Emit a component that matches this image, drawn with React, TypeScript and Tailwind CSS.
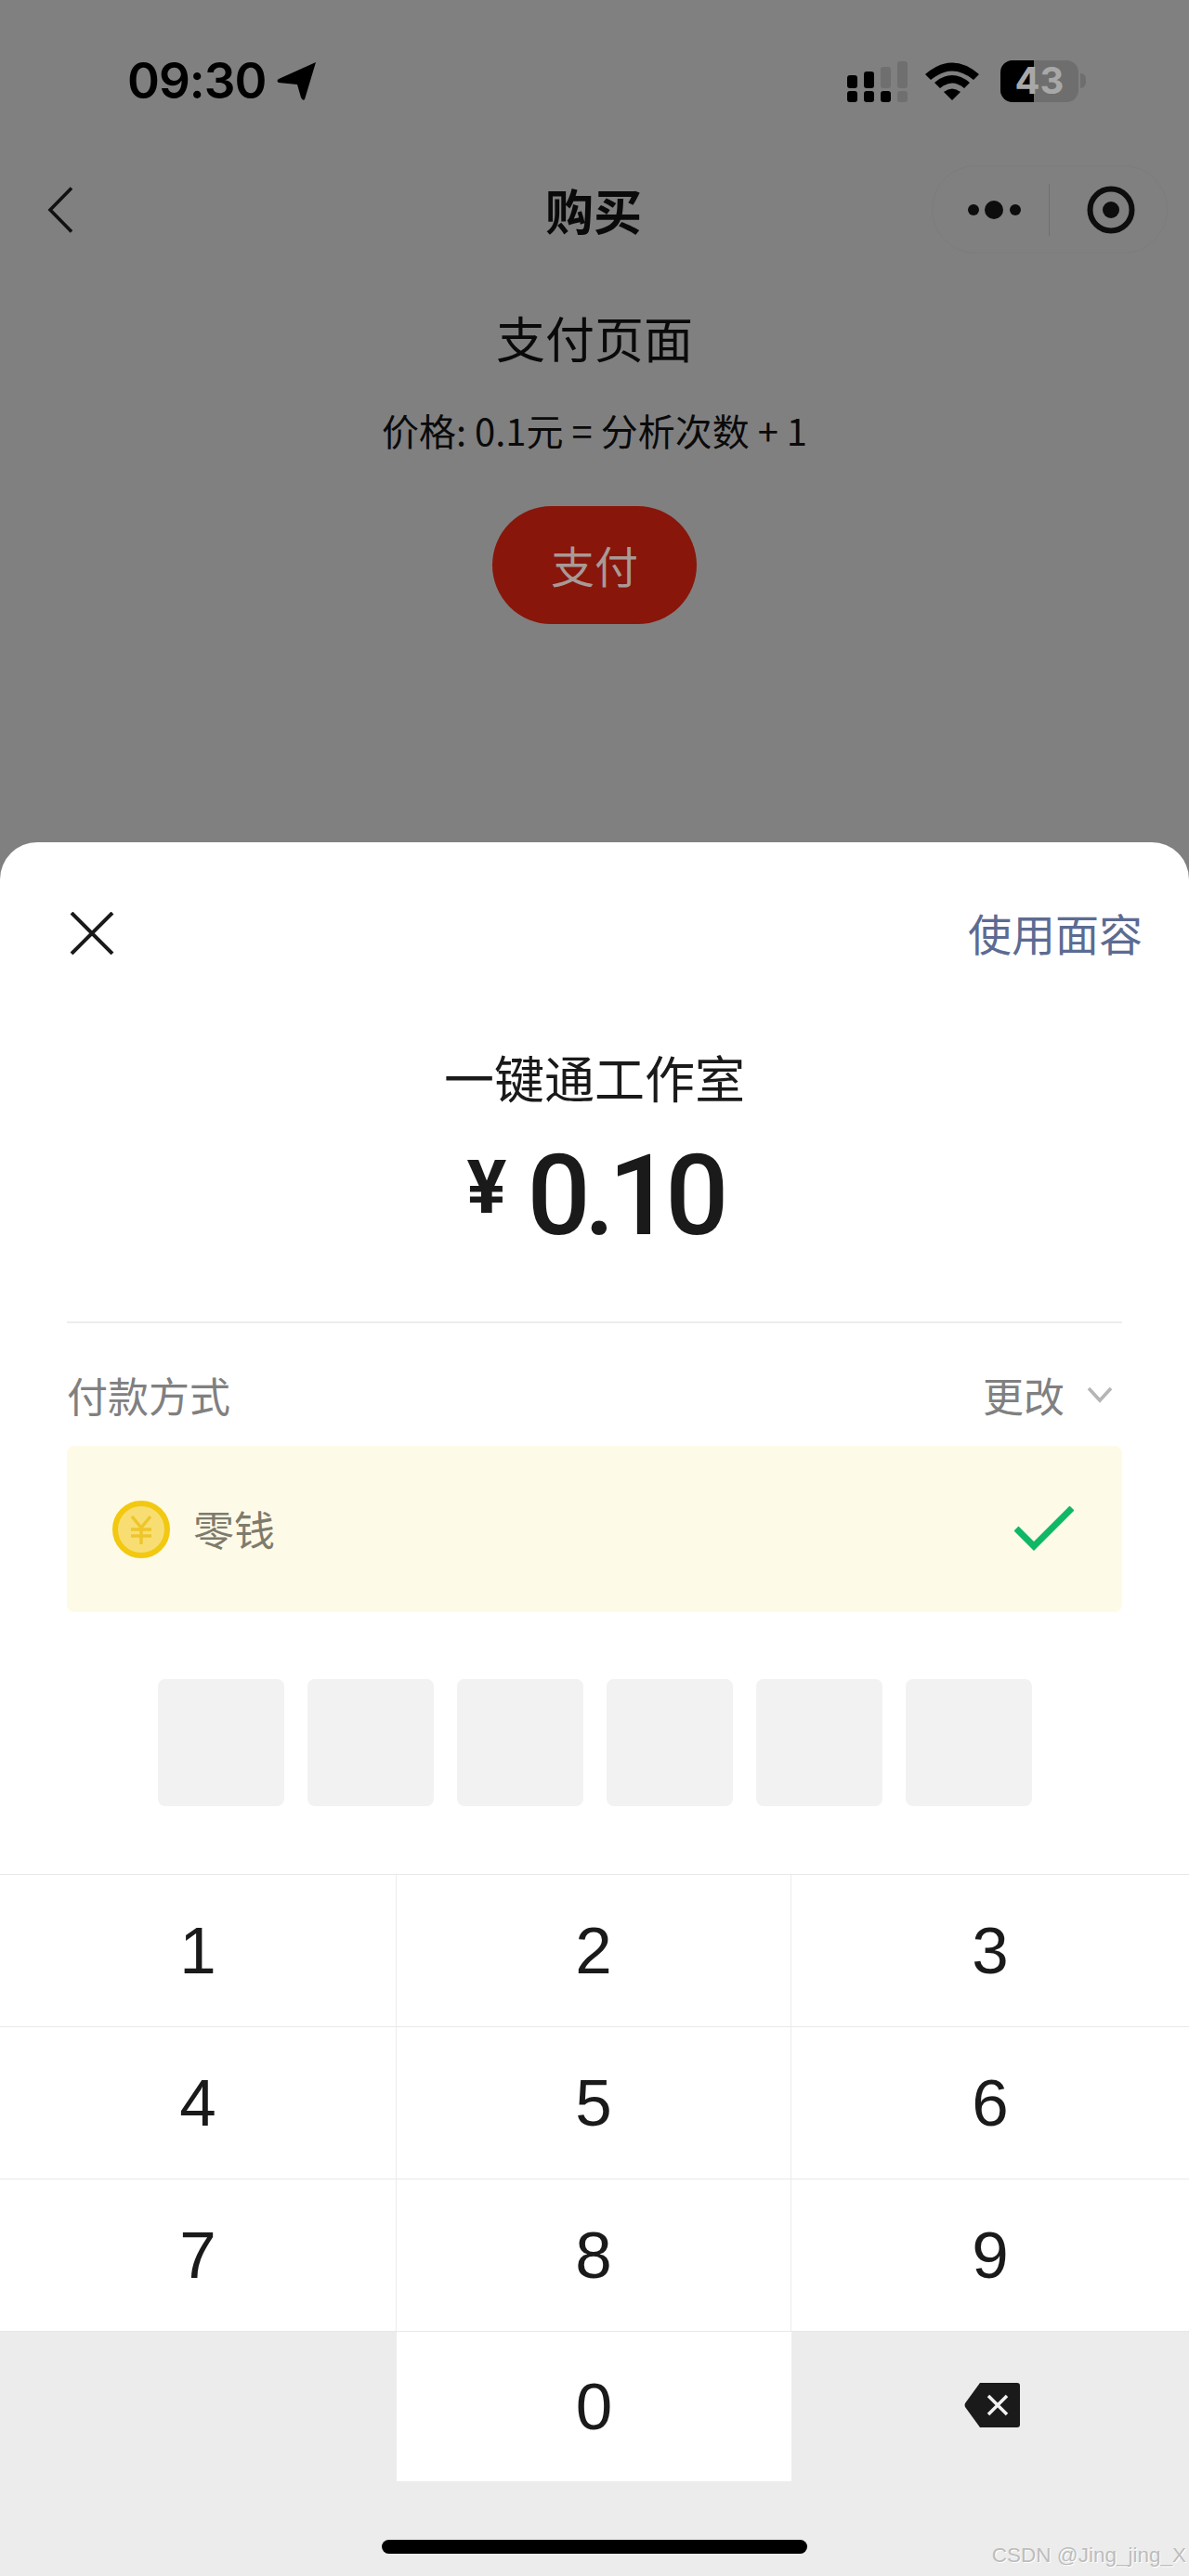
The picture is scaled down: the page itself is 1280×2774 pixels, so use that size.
const CJK = "font-['Noto_Sans_CJK_SC','Noto_Sans',sans-serif]";

function Signal() {
  return (
    <svg width="70" height="46" viewBox="0 0 70 46" className="block">
      <rect x="0" y="17" width="11" height="14" rx="3" fill="#000" />
      <rect x="18" y="13" width="11" height="18" rx="3" fill="#000" />
      <rect x="36" y="8" width="11" height="23" rx="3" fill="#6f6f6f" />
      <rect x="54" y="2" width="11" height="29" rx="3" fill="#6f6f6f" />
      <rect x="0" y="34" width="11" height="12" rx="3" fill="#000" />
      <rect x="18" y="34" width="11" height="12" rx="3" fill="#000" />
      <rect x="36" y="34" width="11" height="12" rx="3" fill="#000" />
      <rect x="54" y="34" width="11" height="12" rx="3" fill="#6f6f6f" />
    </svg>
  );
}

function Wifi() {
  return (
    <svg width="58" height="42" viewBox="0 0 58 42" className="block">
      <path d="M0 14 Q29 -11 58 14 L52 20 Q29 1 6 20 Z" fill="#000" />
      <path d="M10 23 Q29 7 48 23 L42 29 Q29 18 16 29 Z" fill="#000" />
      <path d="M20 33 Q29 26 38 33 L29 42 Z" fill="#000" />
    </svg>
  );
}

function Battery() {
  return (
    <div className="relative flex items-center">
      <div className="relative w-[84px] h-[45px] rounded-[13px] bg-[#6e6e6e] flex items-center justify-center">
        <div className="absolute left-0 top-0 bottom-0 w-[36px] rounded-l-[13px] bg-black" />
        <span className="relative text-[40px] leading-none font-bold text-[#a8a8a8] font-['Inter',sans-serif]">43</span>
      </div>
      <div className="w-[6px] h-[16px] ml-[2px] rounded-r-full bg-[#6e6e6e]" />
    </div>
  );
}

function StatusBar() {
  return (
    <div className="h-[174px] mb-[4px] pl-[137px] pr-[111px] flex items-center justify-between shrink-0">
      <div className="flex items-center gap-[12px]">
        <span className="text-[53px] leading-none font-semibold text-black tracking-[-1px] font-['Inter',sans-serif]">09:30</span>
        <svg width="42" height="41" viewBox="0 0 42 41" className="block">
          <path d="M42 0 L30 40 Q28 42 26 38 L22 24 L2 22 Q-1 20 2 18 Z" fill="#000" />
        </svg>
      </div>
      <div className="flex items-center gap-[14px]">
        <Signal />
        <Wifi />
        <div className="ml-[9px]"><Battery /></div>
      </div>
    </div>
  );
}

function NavBar() {
  return (
    <div className="h-[95px] pl-[51px] pr-[23px] grid grid-cols-[224px_1fr_254px] items-center shrink-0">
      <svg width="28" height="50" viewBox="0 0 28 50" className="block">
        <path d="M26 1.5 L3 25 L26 48.5" fill="none" stroke="#111" strokeWidth="3.6" />
      </svg>
      <span className={`justify-self-center text-[52px] leading-none font-bold text-[#0a0a0a] ${CJK}`}>购买</span>
      <div className="w-[254px] h-[95px] rounded-full border border-[#7c7c7c] flex items-center">
        <div className="flex-1 flex items-center justify-center">
          <svg width="62" height="24" viewBox="0 0 62 24" className="block ml-[9px]">
            <circle cx="8" cy="12" r="6" fill="#0d0d0d" />
            <circle cx="30" cy="12" r="10" fill="#0d0d0d" />
            <circle cx="53" cy="12" r="6" fill="#0d0d0d" />
          </svg>
        </div>
        <div className="w-px h-[56px] bg-[#707070]" />
        <div className="w-[126px] flex items-center justify-center">
          <svg width="52" height="52" viewBox="0 0 52 52" className="block ml-[5px]">
            <circle cx="26" cy="26" r="22.5" fill="none" stroke="#0d0d0d" strokeWidth="6" />
            <circle cx="26" cy="26" r="9" fill="#0d0d0d" />
          </svg>
        </div>
      </div>
    </div>
  );
}

function Coin() {
  return (
    <svg width="62" height="62" viewBox="0 0 62 62" className="block">
      <circle cx="31" cy="31" r="28" fill="#f8de72" stroke="#f2c811" strokeWidth="6" />
      <path d="M21 17 L31 29 L41 17 M20 31 H42 M20 38 H42 M31 29 V47" fill="none" stroke="#eec62a" strokeWidth="3.5" />
    </svg>
  );
}

const rows = [["1", "2", "3"], ["4", "5", "6"], ["7", "8", "9"]];

function Key({ label, border }: { label: string; border: boolean }) {
  return (
    <div className={`h-[163px] flex items-center justify-center text-[71px] leading-none text-[#1a1a1a] font-['Liberation_Sans',sans-serif] ${border ? "border-r border-[#ececec]" : ""}`}>
      {label}
    </div>
  );
}

export default function App() {
  return (
    <div className="relative w-[1280px] h-[2774px] overflow-hidden bg-[#808080] flex flex-col">
      <div className="h-[907px] shrink-0 flex flex-col">
        <StatusBar />
        <NavBar />
        <div className={`flex flex-col items-center ${CJK}`}>
          <div className="mt-[52px] h-[76px] flex items-center text-[53px] leading-none text-[#0a0a0a]">支付页面</div>
          <div className="mt-[32px] h-[60px] flex items-center text-[40px] leading-none text-[#0a0a0a]">价格: 0.1元 = 分析次数 + 1</div>
          <div className="mt-[52px] pb-[3px] w-[220px] h-[127px] rounded-full bg-[#88160b] flex items-center justify-center text-[47px] leading-none text-[#a89a96]">支付</div>
        </div>
      </div>

      <div className="flex-1 bg-white rounded-t-[40px] flex flex-col">
        <div className={`h-[196px] pl-[75px] pr-[50px] flex items-center justify-between shrink-0 ${CJK}`}>
          <svg width="48" height="46" viewBox="0 0 48 46" className="block">
            <path d="M2 1 L46 45 M46 1 L2 45" fill="none" stroke="#1a1a1a" strokeWidth="4" />
          </svg>
          <span className="text-[47px] leading-none text-[#5c6b92] mb-[4px]">使用面容</span>
        </div>

        <div className={`mt-[22px] h-[70px] flex items-center justify-center text-[54px] leading-none text-[#1a1a1a] ${CJK}`}>一键通工作室</div>

        <div className="mt-[28px] h-[130px] flex items-center justify-center text-[#1a1a1a] font-['Roboto',sans-serif]">
          <span className="text-[80px] leading-none font-bold mr-[22px] mb-[18px]">¥</span>
          <span className="text-[120px] leading-none font-medium tracking-[-7px]">0.10</span>
        </div>

        <div className="mx-[72px] mt-[70px] h-[2px] bg-[#ededed] shrink-0" />

        <div className={`mx-[72px] mt-[47px] h-[60px] flex items-center justify-between ${CJK}`}>
          <span className="text-[44px] leading-none text-[#808080]">付款方式</span>
          <div className="flex items-center">
            <span className="text-[44px] leading-none text-[#808080]">更改</span>
            <svg width="28" height="18" viewBox="0 0 28 18" className="block ml-[24px] mr-[10px]">
              <path d="M2 2 L14 15 L26 2" fill="none" stroke="#b5b5b5" strokeWidth="3.6" />
            </svg>
          </div>
        </div>

        <div className="mx-[72px] mt-[25px] h-[179px] rounded-[8px] bg-[#fefae8] pl-[49px] pr-[52px] flex items-center justify-between">
          <div className="flex items-center gap-[25px]">
            <Coin />
            <span className={`text-[44px] leading-none text-[#7f7b6c] mb-[2px] ${CJK}`}>零钱</span>
          </div>
          <svg width="64" height="48" viewBox="0 0 64 48" className="block mt-[-2px]">
            <path d="M2 24 L21 43 L62 2" fill="none" stroke="#10b765" strokeWidth="7" />
          </svg>
        </div>

        <div className="mt-[72px] pl-[170px] flex gap-[25px]">
          {[0, 1, 2, 3, 4, 5].map((i) => (
            <div key={i} className="w-[136px] h-[137px] rounded-[8px] bg-[#f2f2f2]" />
          ))}
        </div>

        <div className="mt-[73px] border-t border-[#e8e8e8]">
          {rows.map((row) => (
            <div key={row[0]} className="grid grid-cols-[427px_425px_1fr] border-b border-[#e8e8e8]">
              <Key label={row[0]} border />
              <Key label={row[1]} border />
              <Key label={row[2]} border={false} />
            </div>
          ))}
        </div>

        <div className="flex-1 bg-[#ececec] flex flex-col">
          <div className="grid grid-cols-[427px_425px_1fr] h-[161px]">
            <div />
            <div className="bg-white flex items-center justify-center text-[71px] leading-none text-[#1a1a1a] font-['Liberation_Sans',sans-serif]">0</div>
            <div className="flex items-center pl-[186px] pb-[3px]">
              <svg width="60" height="48" viewBox="0 0 60 48" className="block">
                <path d="M17 0 H57 Q60 0 60 3 V45 Q60 48 57 48 H17 L1 26 Q0 24 1 22 Z" fill="#1a1a1a" />
                <path d="M26 14 L46 34 M46 14 L26 34" fill="none" stroke="#f2f2f2" strokeWidth="3.5" />
              </svg>
            </div>
          </div>
          <div className="mt-[63px] mx-auto w-[458px] h-[15px] rounded-full bg-black" />
        </div>
      </div>

      <span className="absolute right-[3px] bottom-[11px] text-[22.5px] leading-none text-[#bdbdbd] font-['Liberation_Sans',sans-serif] [text-shadow:1px_1px_0_#fff]">CSDN @Jing_jing_X</span>
    </div>
  );
}
